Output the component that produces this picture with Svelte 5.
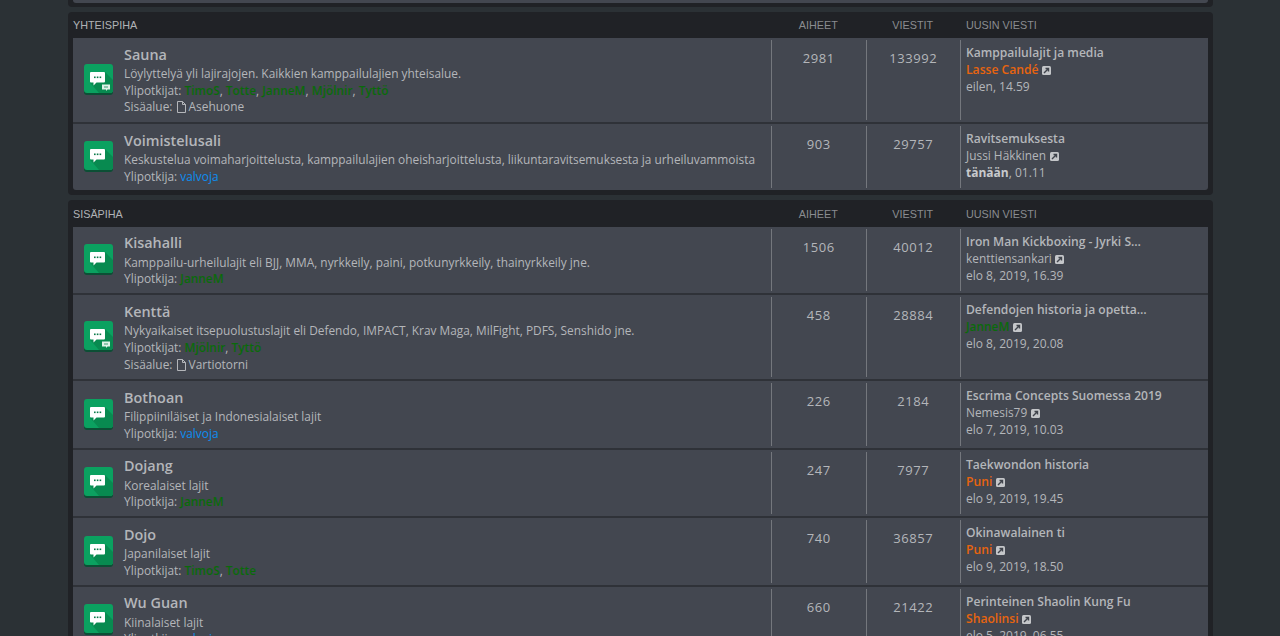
<script lang="ts">
  const mods = (names: string[]) => names.map((n) => ({ name: n, color: 'green' }));
  const valvoja = [{ name: 'valvoja', color: 'blue' }];

  const categories = [
    {
      title: 'Yhteispiha',
      forums: [
        {
          name: 'Sauna',
          desc: 'Löylyttelyä yli lajirajojen. Kaikkien kamppailulajien yhteisalue.',
          mods: mods(['TimoS', 'Totte', 'JanneM', 'Mjölnir', 'Tyttö']),
          sub: 'Asehuone',
          topics: 2981,
          posts: 133992,
          last: { title: 'Kamppailulajit ja media', user: 'Lasse Candé', color: 'orange', time: 'eilen, 14.59' }
        },
        {
          name: 'Voimistelusali',
          desc: 'Keskustelua voimaharjoittelusta, kamppailulajien oheisharjoittelusta, liikuntaravitsemuksesta ja urheiluvammoista',
          mods: valvoja,
          topics: 903,
          posts: 29757,
          last: { title: 'Ravitsemuksesta', user: 'Jussi Häkkinen', color: '', today: 'tänään', time: ', 01.11' }
        }
      ]
    },
    {
      title: 'Sisäpiha',
      forums: [
        {
          name: 'Kisahalli',
          desc: 'Kamppailu-urheilulajit eli BJJ, MMA, nyrkkeily, paini, potkunyrkkeily, thainyrkkeily jne.',
          mods: mods(['JanneM']),
          topics: 1506,
          posts: 40012,
          last: { title: 'Iron Man Kickboxing - Jyrki S…', user: 'kenttiensankari', color: '', time: 'elo 8, 2019, 16.39' }
        },
        {
          name: 'Kenttä',
          desc: 'Nykyaikaiset itsepuolustuslajit eli Defendo, IMPACT, Krav Maga, MilFight, PDFS, Senshido jne.',
          mods: mods(['Mjölnir', 'Tyttö']),
          sub: 'Vartiotorni',
          topics: 458,
          posts: 28884,
          last: { title: 'Defendojen historia ja opetta…', user: 'JanneM', color: 'green', time: 'elo 8, 2019, 20.08' }
        },
        {
          name: 'Bothoan',
          desc: 'Filippiiniläiset ja Indonesialaiset lajit',
          mods: valvoja,
          topics: 226,
          posts: 2184,
          last: { title: 'Escrima Concepts Suomessa 2019', user: 'Nemesis79', color: '', time: 'elo 7, 2019, 10.03' }
        },
        {
          name: 'Dojang',
          desc: 'Korealaiset lajit',
          mods: mods(['JanneM']),
          topics: 247,
          posts: 7977,
          last: { title: 'Taekwondon historia', user: 'Puni', color: 'orange', time: 'elo 9, 2019, 19.45' }
        },
        {
          name: 'Dojo',
          desc: 'Japanilaiset lajit',
          mods: mods(['TimoS', 'Totte']),
          topics: 740,
          posts: 36857,
          last: { title: 'Okinawalainen ti', user: 'Puni', color: 'orange', time: 'elo 9, 2019, 18.50' }
        },
        {
          name: 'Wu Guan',
          desc: 'Kiinalaiset lajit',
          mods: valvoja,
          topics: 660,
          posts: 21422,
          last: { title: 'Perinteinen Shaolin Kung Fu', user: 'Shaolinsi', color: 'orange', time: 'elo 5, 2019, 06.55' }
        }
      ]
    }
  ];
</script>

<div class="page">
  <div class="stub"><div class="stub-row"></div></div>

  {#each categories as cat}
    <section class="category">
      <div class="head">
        <div class="head-title">{cat.title}</div>
        <div class="head-col">Aiheet</div>
        <div class="head-col">Viestit</div>
        <div class="head-last">Uusin viesti</div>
      </div>
      {#each cat.forums as f}
        <div class="row">
          <svg class="icon" viewBox="0 0 29 31" aria-hidden="true">
            <rect y="1" width="29" height="30" rx="3" fill="#0c4f35" />
            <rect width="29" height="29" rx="3" fill="#0ba160" />
            <path d="M6 19 L21 8 L29 16 L29 26 Q29 29 26 29 L15 29 L9 22 Z" fill="#088a50" />
            <path d="M7 8 H20 Q21 8 21 9 V17.5 Q21 18.5 20 18.5 H12.5 L9.5 21.5 V18.5 H7 Q6 18.5 6 17.5 V9 Q6 8 7 8 Z" fill="#fff" />
            <rect x="10" y="12.5" width="1.6" height="1.6" fill="#0a7a4a" />
            <rect x="12.8" y="12.5" width="1.6" height="1.6" fill="#0a7a4a" />
            <rect x="15.6" y="12.5" width="1.6" height="1.6" fill="#0a7a4a" />
            {#if f.sub}
              <path d="M18 20.5 H26 V25.5 H23.5 L22 27 V25.5 H18 Z" fill="#dff1e8" />
              <rect x="20" y="22.5" width="4" height="1" fill="#3d9b70" />
            {/if}
          </svg>
          <div class="info">
            <div class="name">{f.name}</div>
            <div>{f.desc}</div>
            <div>
              {f.mods.length > 1 ? 'Ylipotkijat' : 'Ylipotkija'}:
              {#each f.mods as m, i}<span class={m.color}>{m.name}</span>{#if i < f.mods.length - 1},&nbsp;{/if}{/each}
            </div>
            {#if f.sub}
              <div class="sub">
                Sisäalue:
                <svg class="file" viewBox="0 0 10 12" aria-hidden="true">
                  <path d="M1.5 .5 H6.5 L9.5 3.5 V11.5 H1.5 Z M6.5 .5 V3.5 H9.5" fill="none" stroke="currentColor" />
                </svg>
                {f.sub}
              </div>
            {/if}
          </div>
          <div class="num">{f.topics}</div>
          <div class="num">{f.posts}</div>
          <div class="last">
            <div class="last-title">{f.last.title}</div>
            <div class="last-user">
              <span class={f.last.color}>{f.last.user}</span>
              <svg class="goto" viewBox="0 0 9 9" aria-hidden="true">
                <rect width="9" height="9" rx="1.5" fill="#c4c6c9" />
                <path d="M2 7 L6 3 M3.5 2.5 H6.5 V5.5" fill="none" stroke="#3f434b" stroke-width="1.4" />
              </svg>
            </div>
            <div>{#if f.last.today}<strong>{f.last.today}</strong>{/if}{f.last.time}</div>
          </div>
        </div>
      {/each}
    </section>
  {/each}
</div>

<style>
  :global(body) {
    background: #2b3135;
    overflow: hidden;
  }

  .page {
    width: 1145px;
    margin-left: 68px;
    font-family: "Open Sans", "Liberation Sans", sans-serif;
    font-size: 11.88px;
    line-height: 16.63px;
    color: #b4b6ba;
  }

  .stub {
    height: 2.5px;
    padding: 0 5px 4px;
    background: #202226;
    border-radius: 0 0 4px 4px;
    margin-bottom: 5px;
  }

  .stub-row {
    height: 2.5px;
    background: #434750;
    border-radius: 0 0 3px 3px;
  }

  .category {
    background: #202226;
    border-radius: 4px;
    padding: 0 5px 4.5px;
    margin-bottom: 5.3px;
  }

  .head {
    display: flex;
    height: 26.5px;
    padding-top: 1px;
    box-sizing: border-box;
    align-items: center;
    font-family: "Liberation Sans", Arial, sans-serif;
    font-size: 10.8px;
    text-transform: uppercase;
    color: #8a8c90;
  }

  .head-title {
    flex: 1;
    color: #b0b2b6;
  }

  .head-col {
    width: 94.5px;
    text-align: center;
  }

  .head-last {
    width: 248px;
    padding-left: 6px;
    box-sizing: border-box;
  }

  .row {
    display: flex;
    align-items: stretch;
    padding: 2px 0;
    background: #434750;
    border-bottom: 2px solid #2f3238;
  }

  .row:first-of-type {
    border-radius: 3px 3px 0 0;
  }

  .row:last-child {
    border-bottom: 0;
    border-radius: 0 0 3px 3px;
  }

  .icon {
    width: 29px;
    height: 31px;
    flex: none;
    align-self: center;
    margin: 0 11px 1px;
  }

  .info {
    flex: 1;
    min-width: 0;
    padding: 4.6px 0 4.3px;
  }

  .name {
    font-size: 14.4px;
    font-weight: 600;
    line-height: 20px;
    margin-bottom: .4px;
  }

  .sub {
    line-height: 17.4px;
  }

  .num {
    width: 94.5px;
    flex: none;
    box-sizing: border-box;
    border-left: 1px solid #74777d;
    padding-top: 10px;
    text-align: center;
    font-size: 13px;
    letter-spacing: .6px;
  }

  .last {
    width: 248px;
    flex: none;
    box-sizing: border-box;
    border-left: 1px solid #74777d;
    padding: 4px 0 0 5px;
    font-size: 12px;
    line-height: 17px;
  }

  .last-title {
    font-size: 12.1px;
    font-weight: 600;
  }

  .last-user {
    font-size: 11.88px;
  }

  .green {
    color: #0a6a0a;
    font-weight: 600;
  }

  .blue {
    color: #0c8ef0;
  }

  .orange {
    color: #e8640e;
    font-size: 12.15px;
    font-weight: 600;
  }

  strong {
    font-weight: 700;
    color: #c8cacd;
  }

  .file {
    width: 10px;
    height: 12px;
    vertical-align: -2px;
  }

  .goto {
    width: 9px;
    height: 9px;
    vertical-align: -1px;
    margin-left: .5px;
  }
</style>
